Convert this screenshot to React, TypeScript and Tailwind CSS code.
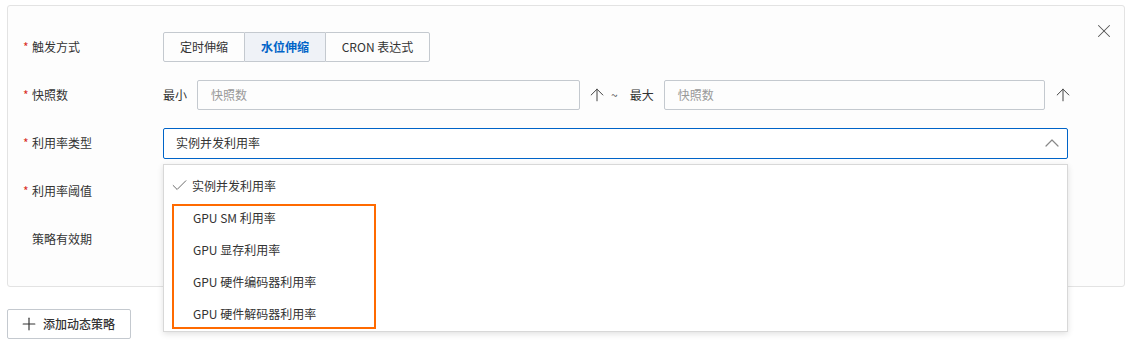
import { ArrowUp, Check, ChevronUp, Plus, X } from "lucide-react";

const font = { fontFamily: '"Noto Sans CJK SC", "Noto Sans", sans-serif' };

function Label({ text, required }: { text: string; required?: boolean }) {
  return (
    <div className="w-[140px] shrink-0 flex items-center text-[12px] text-[#333]">
      <span className={`w-[9px] text-[#d93026] ${required ? "" : "invisible"}`}>*</span>
      {text}
    </div>
  );
}

function Row({ children }: { children: React.ReactNode }) {
  return <div className="h-[48px] flex items-center">{children}</div>;
}

const options = [
  "GPU SM 利用率",
  "GPU 显存利用率",
  "GPU 硬件编码器利用率",
  "GPU 硬件解码器利用率",
];

export default function App() {
  return (
    <div className="w-[1132px] h-[361px] bg-white relative" style={font}>
      <div className="pt-[5px] px-[7px]">
        <div className="relative border border-[#e3e3e3] rounded-[3px] bg-[#fdfdfd] pt-[17px] pb-[23px] pl-[15px] pr-[50px]">
          <button className="absolute right-[9px] top-[14px] text-[#555]">
            <X size={22} strokeWidth={1.1} />
          </button>

          <Row>
            <Label text="触发方式" required />
            <div className="flex h-[30px] text-[12px] text-[#333]">
              <div className="w-[82px] flex items-center justify-center border border-[#c4c9cf] rounded-l-[2px]">
                定时伸缩
              </div>
              <div className="w-[80px] flex items-center justify-center border-y border-[#c4c9cf] bg-[#eff2f7] text-[#0064c8] font-bold">
                水位伸缩
              </div>
              <div className="w-[105px] flex items-center justify-center border border-[#c4c9cf] rounded-r-[2px]">
                CRON 表达式
              </div>
            </div>
          </Row>

          <Row>
            <Label text="快照数" required />
            <div className="flex-1 flex items-center text-[12px] text-[#333]">
              <span className="mr-[10px]">最小</span>
              <div className="w-[383px] h-[30px] border border-[#c4c9cf] rounded-[2px] flex items-center px-[13px] text-[#999]">
                快照数
              </div>
              <ArrowUp size={20} strokeWidth={1.2} className="ml-[7px] text-[#444]" />
              <span className="ml-[4px] text-[#555]">~</span>
              <span className="ml-[12px]">最大</span>
              <div className="ml-[10px] w-[381px] h-[30px] border border-[#c4c9cf] rounded-[2px] flex items-center px-[13px] text-[#999]">
                快照数
              </div>
              <ArrowUp size={20} strokeWidth={1.2} className="ml-[8px] text-[#444]" />
            </div>
          </Row>

          <Row>
            <Label text="利用率类型" required />
            <div className="relative w-[905px] shrink-0">
              <div className="h-[31px] border border-[#0064c8] rounded-[2px] flex items-center justify-between pl-[12px] pr-[3px] text-[12px] text-[#333] bg-white">
                实例并发利用率
                <ChevronUp size={24} strokeWidth={1.2} className="text-[#888]" />
              </div>
              <div className="absolute left-0 top-full mt-[5px] w-full h-[168px] z-10 bg-white border border-[#d8d8d8] shadow-[0_2px_6px_rgba(0,0,0,0.12)] py-[5px] text-[12px] text-[#333]">
                <div className="h-[32px] flex items-center pl-[6px]">
                  <Check size={19} strokeWidth={1.1} className="text-[#555] mr-[3px]" />
                  实例并发利用率
                </div>
                {options.map((o) => (
                  <div key={o} className="h-[32px] flex items-center pl-[29px]">
                    {o}
                  </div>
                ))}
                <div className="absolute left-[8px] top-[39px] w-[204px] h-[125px] border-2 border-[#ff6a00] pointer-events-none" />
              </div>
            </div>
          </Row>

          <Row>
            <Label text="利用率阈值" required />
          </Row>

          <Row>
            <Label text="策略有效期" />
          </Row>
        </div>

        <button className="mt-[22px] w-[124px] h-[30px] border border-[#c4c9cf] rounded-[2px] bg-white flex items-center pl-[11px] text-[12px] font-medium text-[#333]">
          <Plus size={20} strokeWidth={1.4} className="mr-[4px]" />
          添加动态策略
        </button>
      </div>
    </div>
  );
}
